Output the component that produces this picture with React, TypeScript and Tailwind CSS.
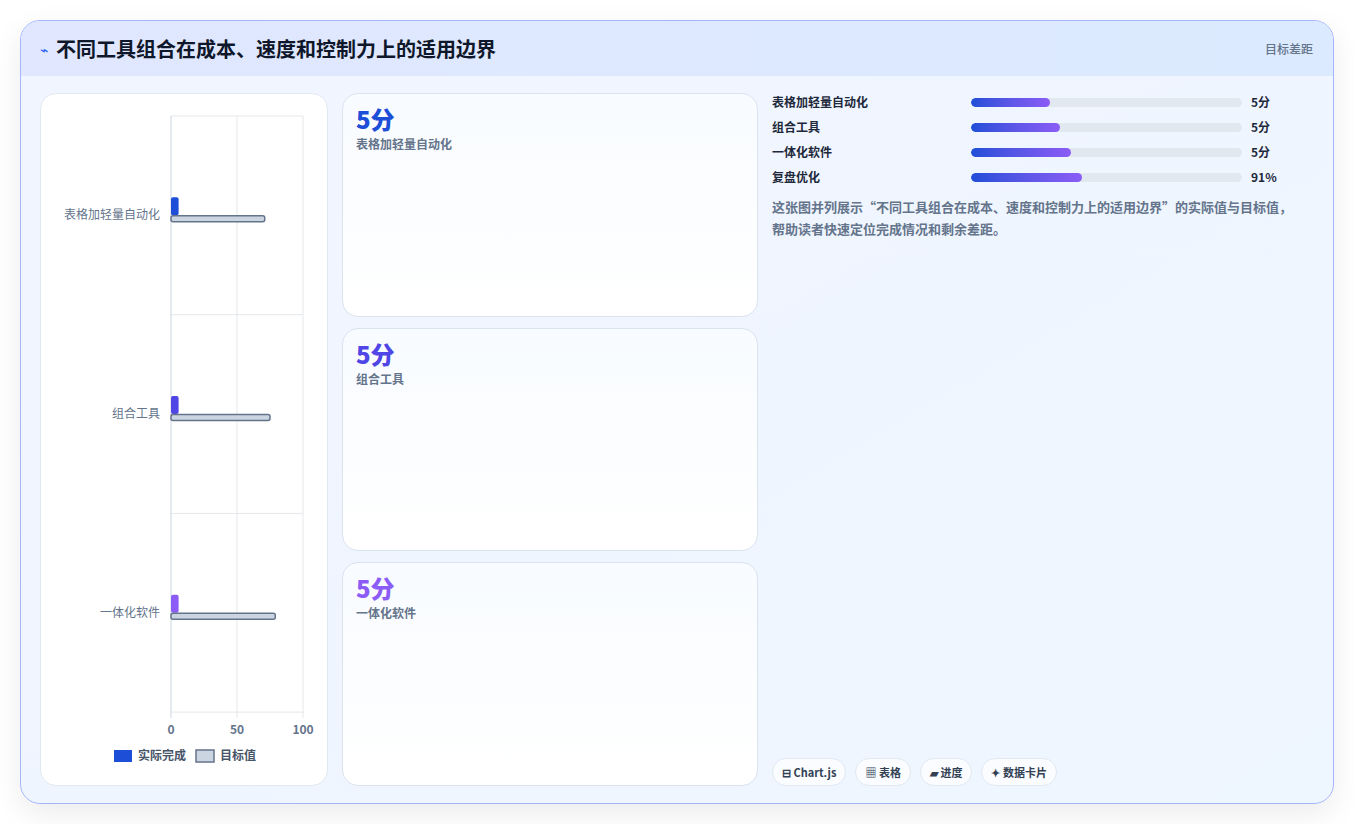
import React from 'react';

const font = { fontFamily: '"Noto Sans CJK SC", "Noto Sans", sans-serif' };

const cats = [
  { name: '表格加轻量自动化', actual: 5, target: 71, color: '#1d4ed8' },
  { name: '组合工具', actual: 5, target: 75, color: '#4f46e5' },
  { name: '一体化软件', actual: 5, target: 79, color: '#8b5cf6' },
];

const progress = [
  { name: '表格加轻量自动化', pct: 29, val: '5分' },
  { name: '组合工具', pct: 33, val: '5分' },
  { name: '一体化软件', pct: 37, val: '5分' },
  { name: '复盘优化', pct: 41, val: '91%' },
];

const Chart: React.FC = () => {
  const x0 = 130;
  const w = 132;
  const top = 22;
  const band = 198.7;
  return (
    <svg width="288" height="691" viewBox="0 0 288 691">
      {[0, 1, 2].map((i) => (
        <line key={'h' + i} x1={x0} x2={x0 + w} y1={top + band * (i + 1)} y2={top + band * (i + 1)} stroke="#e5e7eb" />
      ))}
      <line x1={x0} x2={x0 + w} y1={top} y2={top} stroke="#e5e7eb" />
      {[0, 1, 2].map((i) => (
        <line key={'v' + i} x1={x0 + (w / 2) * i} x2={x0 + (w / 2) * i} y1={top} y2={top + band * 3 + 6} stroke={i === 0 ? '#cbd5e1' : '#e5e7eb'} />
      ))}
      {cats.map((c, i) => {
        const cy = top + band * i + band / 2;
        return (
          <g key={c.name}>
            <text x={x0 - 11} y={cy + 4} textAnchor="end" fontSize="12" fill="#64748b" style={font}>{c.name}</text>
            <rect x={x0} y={cy - 18} width={(w * c.actual) / 100 + 1} height={18} rx="2" fill={c.color} />
            <rect x={x0} y={cy + 0.5} width={(w * c.target) / 100} height={6} rx="2" fill="#cbd5e1" stroke="#64748b" strokeWidth="1.5" />
          </g>
        );
      })}
      {['0', '50', '100'].map((t, i) => (
        <text key={t} x={x0 + (w / 2) * i} y={640} textAnchor="middle" fontSize="12" fontWeight="bold" fill="#64748b" style={font}>{t}</text>
      ))}
      <rect x={73} y={656} width={18} height={12} fill="#1d4ed8" />
      <text x={97} y={666} fontSize="12" fontWeight="bold" fill="#475569" style={font}>实际完成</text>
      <rect x={155} y={656} width={18} height={12} fill="#cbd5e1" stroke="#64748b" strokeWidth="1.5" />
      <text x={179} y={666} fontSize="12" fontWeight="bold" fill="#475569" style={font}>目标值</text>
    </svg>
  );
};

const App: React.FC = () => {
  return (
    <div className="w-[1354px] h-[824px] bg-white p-5" style={font}>
      <div className="w-full h-[784px] rounded-[20px] border border-[#a5b4fc] overflow-hidden flex flex-col bg-gradient-to-br from-[#f1f5ff] to-[#eef6ff] shadow-[0_10px_30px_rgba(0,0,0,0.08)]">
        <div className="h-[55px] shrink-0 flex items-center justify-between pl-[19px] pr-5 bg-gradient-to-r from-[#e0e7ff] to-[#dbeafe]">
          <div className="flex items-center gap-2">
            <span className="text-[#2563eb] text-sm">⌁</span>
            <h1 className="text-[20px] font-bold text-[#0f172a]">不同工具组合在成本、速度和控制力上的适用边界</h1>
          </div>
          <span className="text-xs text-[#64748b] font-medium">目标差距</span>
        </div>
        <div className="flex-1 flex gap-[14px] px-[19px] pt-[17px] pb-[18px]">
          <div className="w-[288px] bg-white rounded-2xl border border-[#e2e8f0]">
            <Chart />
          </div>
          <div className="w-[416px] flex flex-col gap-[11px]">
            {cats.map((c) => (
              <div key={c.name} className="flex-1 rounded-2xl border border-[#dbe3ee] bg-gradient-to-b from-[#f8fbff] to-white px-[13px] pt-[10px]">
                <div className="text-[24px] font-extrabold leading-[30px]" style={{ color: c.color }}>5分</div>
                <div className="text-xs font-bold text-[#64748b] mt-[2px]">{c.name}</div>
              </div>
            ))}
          </div>
          <div className="flex-1 flex flex-col pt-[0px]">
            <div className="flex flex-col gap-[7px]">
              {progress.map((p) => (
                <div key={p.name} className="flex items-center h-[18px] text-xs font-bold text-[#1e293b]">
                  <span className="w-[199px]">{p.name}</span>
                  <div className="w-[271px] h-[9px] rounded-full bg-[#e2e8f0] overflow-hidden">
                    <div className="h-full rounded-full bg-gradient-to-r from-[#1d4ed8] to-[#8b5cf6]" style={{ width: `${p.pct}%` }} />
                  </div>
                  <span className="ml-[9px]">{p.val}</span>
                </div>
              ))}
            </div>
            <p className="mt-[10px] pr-[12px] text-[13px] leading-[22px] font-bold text-[#64748b]">
              这张图并列展示“不同工具组合在成本、速度和控制力上的适用边界”的实际值与目标值，帮助读者快速定位完成情况和剩余差距。
            </p>
            <div className="mt-auto flex gap-[9px]">
              {['⊟ Chart.js', '▦ 表格', '▰ 进度', '✦ 数据卡片'].map((t) => (
                <span key={t} className="h-[28px] px-[9px] flex items-center rounded-full bg-white/70 border border-[#e2e8f0] text-[11px] font-bold text-[#334155]">{t}</span>
              ))}
            </div>
          </div>
        </div>
      </div>
    </div>
  );
};

export default App;
